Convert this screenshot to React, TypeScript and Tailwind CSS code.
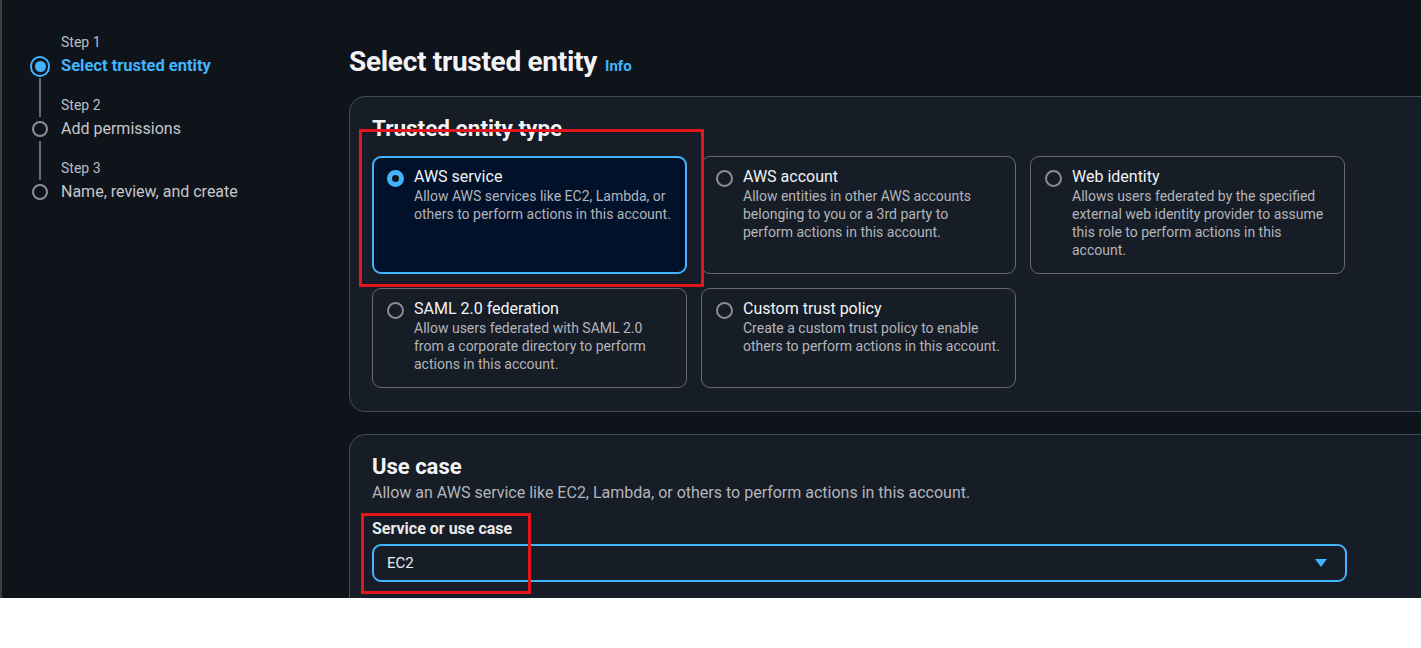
const font = { fontFamily: 'Roboto, "Noto Sans", sans-serif' };

interface Step {
  label: string;
  title: string;
  active?: boolean;
}

const steps: Step[] = [
  { label: 'Step 1', title: 'Select trusted entity', active: true },
  { label: 'Step 2', title: 'Add permissions' },
  { label: 'Step 3', title: 'Name, review, and create' },
];

interface Tile {
  title: string;
  lines: string[];
  selected?: boolean;
}

const tiles: Tile[] = [
  {
    title: 'AWS service',
    lines: ['Allow AWS services like EC2, Lambda, or', 'others to perform actions in this account.'],
    selected: true,
  },
  {
    title: 'AWS account',
    lines: [
      'Allow entities in other AWS accounts',
      'belonging to you or a 3rd party to',
      'perform actions in this account.',
    ],
  },
  {
    title: 'Web identity',
    lines: [
      'Allows users federated by the specified',
      'external web identity provider to assume',
      'this role to perform actions in this',
      'account.',
    ],
  },
  {
    title: 'SAML 2.0 federation',
    lines: [
      'Allow users federated with SAML 2.0',
      'from a corporate directory to perform',
      'actions in this account.',
    ],
  },
  {
    title: 'Custom trust policy',
    lines: ['Create a custom trust policy to enable', 'others to perform actions in this account.'],
  },
];

const StepList = () => (
  <nav className="w-[347px] shrink-0 pl-[28px] pt-[30px]">
    {steps.map((step, i) => (
      <div key={step.label}>
        {/* label row */}
        <div className="flex h-[24px]">
          <div className="w-[20px] flex justify-center">
            {i > 0 && <div className="w-[2px] h-full bg-[#5f6b7a]" />}
          </div>
          <span className="ml-[11px] text-[14px] leading-[24px] text-[#b6bec9]">
            {step.label}
          </span>
        </div>
        {/* title row */}
        <div className="flex h-[24px] items-center">
          <div className="w-[20px] flex justify-center">
            {step.active ? (
              <div className="w-[21px] h-[21px] rounded-full border-[2.5px] border-[#42b4ff] flex items-center justify-center">
                <div className="w-[11px] h-[11px] rounded-full bg-[#42b4ff]" />
              </div>
            ) : (
              <div className="w-[16px] h-[16px] rounded-full border-2 border-[#8c8c94]" />
            )}
          </div>
          <span
            className={`ml-[11px] leading-[24px] ${
              step.active
                ? 'text-[16.5px] font-bold text-[#42b4ff]'
                : 'text-[16px] text-[#c6c6cd]'
            }`}
          >
            {step.title}
          </span>
        </div>
        {i < steps.length - 1 && (
          <div className="flex h-[15px]">
            <div className="w-[20px] flex justify-center">
              <div className="w-[2px] h-full bg-[#5f6b7a]" />
            </div>
          </div>
        )}
      </div>
    ))}
  </nav>
);

const Radio = ({ checked }: { checked?: boolean }) =>
  checked ? (
    <div className="w-[17px] h-[17px] shrink-0 rounded-full border-[5px] border-[#42b4ff] bg-[#0f141a] mt-[3px]" />
  ) : (
    <div className="w-[17px] h-[17px] shrink-0 rounded-full border-2 border-[#8c8c94] mt-[3px]" />
  );

const TileCard = ({ tile }: { tile: Tile }) => (
  <div
    className={`w-[315px] rounded-[9px] flex gap-[10px] pr-[10px] ${
      tile.selected
        ? 'border-2 border-[#42b4ff] bg-[#001129] pl-[13px] pt-[9px] pb-[13px]'
        : 'border border-[#656871] pl-[14px] pt-[10px] pb-[14px]'
    }`}
  >
    <Radio checked={tile.selected} />
    <div className="whitespace-nowrap">
      <div className="text-[16px] leading-[20px] text-[#f3f3f7]">{tile.title}</div>
      <div className="text-[14px] leading-[18px] text-[#b4b4bb]">
        {tile.lines.map((l) => (
          <div key={l}>{l}</div>
        ))}
      </div>
    </div>
  </div>
);

export default function App() {
  return (
    <div className="w-[1421px] h-[648px] bg-white overflow-hidden" style={font}>
      <div className="h-[598px] flex bg-[#0f141a] border-l-2 border-[#3d3d40] overflow-hidden relative">
        <StepList />

        <main className="flex-1 pt-[41px]">
          <h1 className="flex items-baseline gap-[8px] h-[37px]">
            <span className="text-[28px] font-bold text-[#f3f3f7] tracking-[-0.3px]">
              Select trusted entity
            </span>
            <span className="text-[15px] font-bold text-[#42b4ff]">Info</span>
          </h1>

          {/* Trusted entity type */}
          <section className="mt-[18px] w-[1120px] rounded-[16px] border border-[#414d5c] bg-[#161d26] px-[22px] pt-[17px] pb-[23px]">
            <h2 className="text-[22.5px] leading-[28px] font-bold text-[#f3f3f7]">
              Trusted entity type
            </h2>
            <div className="mt-[14px] grid grid-cols-[315px_315px_315px] gap-[14px]">
              {tiles.map((t) => (
                <TileCard key={t.title} tile={t} />
              ))}
            </div>
          </section>

          {/* Use case */}
          <section className="mt-[22px] w-[1120px] h-[200px] rounded-[16px] border border-[#414d5c] bg-[#161d26] px-[22px] pt-[18px]">
            <h2 className="text-[22px] leading-[28px] font-bold text-[#f3f3f7]">Use case</h2>
            <p className="text-[16px] leading-[22px] text-[#b4b4bb] mt-[1px]">
              Allow an AWS service like EC2, Lambda, or others to perform actions in this account.
            </p>
            <label className="block mt-[15px] text-[16px] leading-[20px] font-bold text-[#e9ebed]">
              Service or use case
            </label>
            <div className="mt-[5px] w-[975px] h-[38px] rounded-[9px] border-2 border-[#42b4ff] flex items-center justify-between pl-[13px] pr-[17px]">
              <span className="text-[15px] text-[#e9ebed]">EC2</span>
              <svg width="14" height="10" viewBox="0 0 14 10">
                <path d="M1 1 L13 1 L7 9 Z" fill="#42b4ff" />
              </svg>
            </div>
          </section>
        </main>

        {/* annotation boxes */}
        <div className="absolute left-[357px] top-[129px] w-[345px] h-[158px] border-[3px] border-[#e3151d]" />
        <div className="absolute left-[359px] top-[513px] w-[170px] h-[81px] border-[3px] border-[#e3151d]" />
      </div>
    </div>
  );
}
